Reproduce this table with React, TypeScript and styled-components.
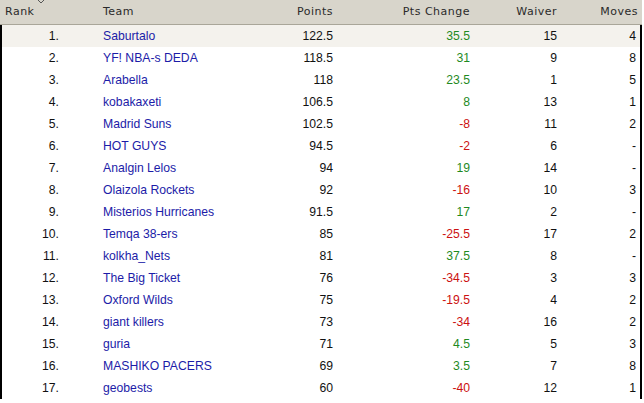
import React from "react";
import styled, { createGlobalStyle } from "styled-components";

const Global = createGlobalStyle`
  html, body { margin: 0; padding: 0; background: #ffffff; }
  body { width: 644px; height: 403px; overflow: hidden; }
`;

type Row = { rank: number; team: string; points: string; change: string; waiver: string; moves: string };

const rows: Row[] = [
  { rank: 1, team: "Saburtalo", points: "122.5", change: "35.5", waiver: "15", moves: "4" },
  { rank: 2, team: "YF! NBA-s DEDA", points: "118.5", change: "31", waiver: "9", moves: "8" },
  { rank: 3, team: "Arabella", points: "118", change: "23.5", waiver: "1", moves: "5" },
  { rank: 4, team: "kobakaxeti", points: "106.5", change: "8", waiver: "13", moves: "1" },
  { rank: 5, team: "Madrid Suns", points: "102.5", change: "-8", waiver: "11", moves: "2" },
  { rank: 6, team: "HOT GUYS", points: "94.5", change: "-2", waiver: "6", moves: "-" },
  { rank: 7, team: "Analgin Lelos", points: "94", change: "19", waiver: "14", moves: "-" },
  { rank: 8, team: "Olaizola Rockets", points: "92", change: "-16", waiver: "10", moves: "3" },
  { rank: 9, team: "Misterios Hurricanes", points: "91.5", change: "17", waiver: "2", moves: "-" },
  { rank: 10, team: "Temqa 38-ers", points: "85", change: "-25.5", waiver: "17", moves: "2" },
  { rank: 11, team: "kolkha_Nets", points: "81", change: "37.5", waiver: "8", moves: "-" },
  { rank: 12, team: "The Big Ticket", points: "76", change: "-34.5", waiver: "3", moves: "3" },
  { rank: 13, team: "Oxford Wilds", points: "75", change: "-19.5", waiver: "4", moves: "2" },
  { rank: 14, team: "giant killers", points: "73", change: "-34", waiver: "16", moves: "2" },
  { rank: 15, team: "guria", points: "71", change: "4.5", waiver: "5", moves: "3" },
  { rank: 16, team: "MASHIKO PACERS", points: "69", change: "3.5", waiver: "7", moves: "8" },
  { rank: 17, team: "geobests", points: "60", change: "-40", waiver: "12", moves: "1" },
];

const COLS = "62px 188px 86px 137px 87px 80px";

const Frame = styled.div`
  width: 642px;
  display: flex;
  flex-direction: column;
`;

const HeaderRow = styled.div`
  display: grid;
  grid-template-columns: ${COLS};
  height: 24px;
  background: #d8d5cb;
  border-bottom: 1px solid #a9a699;
  align-items: center;
  font-family: "DejaVu Sans", Verdana, sans-serif;
  font-size: 11px;
  letter-spacing: 0.5px;
  color: #2a2a2a;
  position: relative;
`;

const SortMark = styled.svg`
  position: absolute;
  left: 38px;
  top: 0;
`;

const HeadCell = styled.div<{ $align: "left" | "right"; $pad?: number }>`
  text-align: ${(p) => p.$align};
  padding-left: ${(p) => (p.$align === "left" ? p.$pad ?? 0 : 0)}px;
  padding-right: ${(p) => (p.$align === "right" ? p.$pad ?? 0 : 0)}px;
  padding-bottom: 2px;
  white-space: nowrap;
`;

const Body = styled.div`
  border-left: 2px solid #000;
  border-right: 2px solid #000;
  display: flex;
  flex-direction: column;
`;

const DataRow = styled.div<{ $hi?: boolean }>`
  display: grid;
  grid-template-columns: 60px 188px 86px 137px 87px 78px;
  height: 22px;
  align-items: center;
  background: ${(p) => (p.$hi ? "#f4f2ed" : "#ffffff")};
  font-family: "Liberation Sans", Arial, sans-serif;
  font-size: 12.2px;
  color: #111;
`;

const Cell = styled.div<{ $align: "left" | "right"; $pad?: number }>`
  text-align: ${(p) => p.$align};
  padding-left: ${(p) => (p.$align === "left" ? p.$pad ?? 0 : 0)}px;
  padding-right: ${(p) => (p.$align === "right" ? p.$pad ?? 0 : 0)}px;
  white-space: nowrap;
`;

const TeamLink = styled.span`
  color: #1c1ca8;
`;

const Change = styled(Cell)<{ $neg: boolean }>`
  color: ${(p) => (p.$neg ? "#cc1111" : "#1f8a1f")};
`;

export default function App() {
  return (
    <>
      <Global />
      <Frame>
        <HeaderRow>
          <SortMark width="6" height="3" viewBox="0 0 6 3">
            <path d="M0 0 L3 3 L6 0" fill="none" stroke="#555" strokeWidth="1" />
          </SortMark>
          <HeadCell $align="left" $pad={5}>Rank</HeadCell>
          <HeadCell $align="left" $pad={41}>Team</HeadCell>
          <HeadCell $align="right" $pad={3}>Points</HeadCell>
          <HeadCell $align="right" $pad={3}>Pts Change</HeadCell>
          <HeadCell $align="right" $pad={3}>Waiver</HeadCell>
          <HeadCell $align="right" $pad={2}>Moves</HeadCell>
        </HeaderRow>
        <Body>
          {rows.map((r, i) => (
            <DataRow key={r.rank} $hi={i === 0}>
              <Cell $align="right" $pad={3}>{r.rank}.</Cell>
              <Cell $align="left" $pad={41}><TeamLink>{r.team}</TeamLink></Cell>
              <Cell $align="right" $pad={3}>{r.points}</Cell>
              <Change $align="right" $pad={3} $neg={r.change.startsWith("-")}>{r.change}</Change>
              <Cell $align="right" $pad={3}>{r.waiver}</Cell>
              <Cell $align="right" $pad={2}>{r.moves}</Cell>
            </DataRow>
          ))}
        </Body>
      </Frame>
    </>
  );
}
